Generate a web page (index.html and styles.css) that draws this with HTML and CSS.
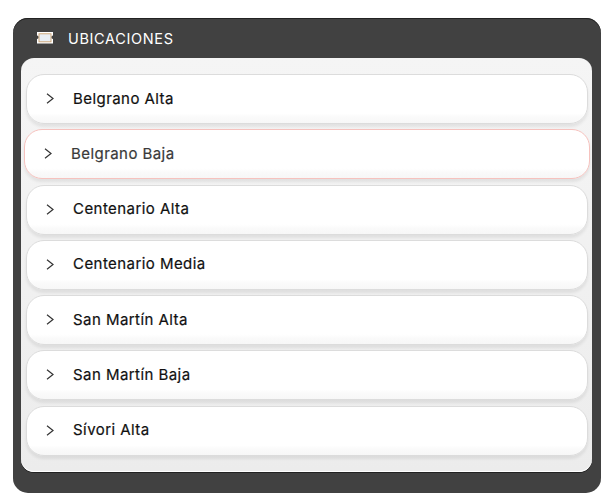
FILE: index.html
```
<!DOCTYPE html>
<html lang="es">
<head>
<meta charset="utf-8">
<title>Ubicaciones</title>
<link rel="stylesheet" href="styles.css">
</head>
<body>
<section class="panel">
  <header class="panel-head">
    <svg class="ticket" width="20" height="14" viewBox="0 0 20 14" aria-hidden="true">
      <path d="M2 1h16v3.500a1.500 1.500 0 0 0 0 3.500v4.500H2V8a1.500 1.500 0 0 0 0-3.500z" fill="#fff"/>
      <rect x="4" y="2.800" width="12" height="8" fill="#e8eef4" stroke="#c9a06f" stroke-width=".9"/>
    </svg>
    <h1 class="panel-title">UBICACIONES</h1>
  </header>
  <ul class="list">
    <li class="row"><svg class="chev" width="8" height="11" viewBox="0 0 8 11"><path d="M1 .8 7 5.500 1 10.200" /></svg><span class="label">Belgrano Alta</span></li>
    <li class="row row-active"><svg class="chev" width="8" height="11" viewBox="0 0 8 11"><path d="M1 .8 7 5.500 1 10.200" /></svg><span class="label">Belgrano Baja</span></li>
    <li class="row"><svg class="chev" width="8" height="11" viewBox="0 0 8 11"><path d="M1 .8 7 5.500 1 10.200" /></svg><span class="label">Centenario Alta</span></li>
    <li class="row"><svg class="chev" width="8" height="11" viewBox="0 0 8 11"><path d="M1 .8 7 5.500 1 10.200" /></svg><span class="label">Centenario Media</span></li>
    <li class="row"><svg class="chev" width="8" height="11" viewBox="0 0 8 11"><path d="M1 .8 7 5.500 1 10.200" /></svg><span class="label">San Martín Alta</span></li>
    <li class="row"><svg class="chev" width="8" height="11" viewBox="0 0 8 11"><path d="M1 .8 7 5.500 1 10.200" /></svg><span class="label">San Martín Baja</span></li>
    <li class="row"><svg class="chev" width="8" height="11" viewBox="0 0 8 11"><path d="M1 .8 7 5.500 1 10.200" /></svg><span class="label">Sívori Alta</span></li>
  </ul>
</section>
</body>
</html>
```
FILE: styles.css
```
* { box-sizing: border-box; }
html, body { margin: 0; background: #fff; }
body { padding: 18px 6px 0 13px; font-family: Inter, "Noto Sans", sans-serif; }
.panel {
  height: 475px;
  background: #414141;
  border-radius: 15px;
  padding: 0 9px 20px 8px;
  box-shadow: inset 0 1px 0 #222;
}
.panel-head {
  height: 40px;
  display: flex;
  align-items: center;
  padding-left: 14px;
  gap: 13px;
}
.ticket { flex: none; }
.panel-title {
  margin: 0;
  color: #fff;
  font-size: 14.500px;
  font-weight: 400;
  letter-spacing: .65px;
}
.list {
  list-style: none;
  margin: 0;
  height: 414px;
  padding: 16px 4px 0 5px;
  display: flex;
  flex-direction: column;
  gap: 5.300px;
  background: linear-gradient(#f5f5f5, #ececec);
  border-radius: 13px;
  box-shadow: inset 0 -1px 0 #fff, 0 1px 0 #222;
}
.row {
  height: 50px;
  flex: none;
  display: flex;
  align-items: center;
  padding-left: 19px;
  gap: 19px;
  font-size: 15px;
  font-weight: 400;
  letter-spacing: .44px;
  color: #111;
  background: linear-gradient(#fff 80%, #fafafa 88%, #f7f7f7);
  border: 1px solid #dcdcdc;
  border-radius: 18px;
  box-shadow: 0 3px 3px rgba(0, 0, 0, .07);
}
.label { position: relative; top: -1px; -webkit-text-stroke: .2px currentColor; }
.row-active {
  margin: 0 -1.500px 0 -2px;
  color: #3a3a3a;
  border-color: #f6c2be;
}
.chev { flex: none; fill: none; stroke: #333; stroke-width: 1.200; position: relative; top: -.5px; }
```
